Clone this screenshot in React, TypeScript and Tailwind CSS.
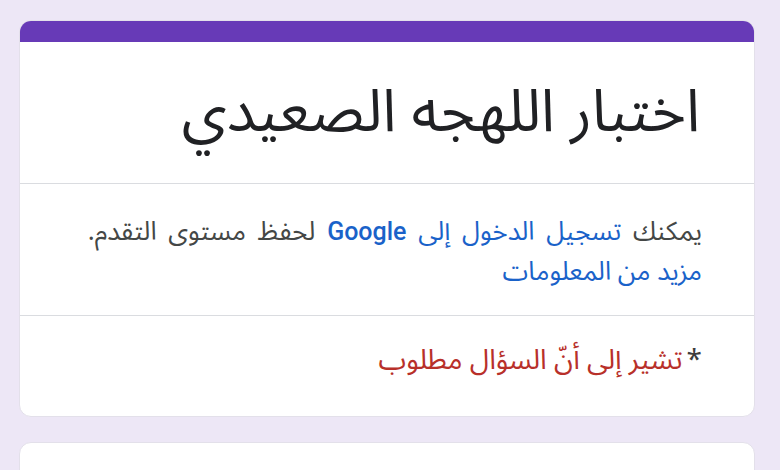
export default function App() {
  return (
    <div
      dir="rtl"
      className="h-[470px] w-[780px] overflow-hidden bg-[#ede7f6] pt-[20px] pr-[25px] pl-[19px]"
      style={{ fontFamily: '"Noto Sans Arabic", "Noto Sans", sans-serif' }}
    >
      <div className="overflow-hidden rounded-[12px] border border-[#e3e0ea] bg-white">
        <div className="h-[21px] bg-[#673ab7]" />
        <div className="flex h-[141px] items-center pr-[54px] pl-6">
          <h1 className="text-[59px] leading-none text-[#202124]">اختبار اللهجه الصعيدي</h1>
        </div>
        <div className="border-t border-[#dadce0] pt-[28px] pr-[52px] pl-6 pb-[23px] text-[26px] leading-[40px] text-[#444746]">
          <p className="[word-spacing:5px]">
            يمكنك{" "}
            <span className="text-[#1a62c9]">
              تسجيل الدخول إلى <span className="font-['Roboto'] text-[25px] font-medium">Google</span>
            </span>{" "}
            لحفظ مستوى التقدم.
          </p>
          <p className="text-[#1a62c9]">مزيد من المعلومات</p>
        </div>
        <div className="flex h-[101px] items-center border-t border-[#dadce0] pr-[52px] pl-6 pb-[10px] text-[28px] text-[#b8302a]">
          <span className="ml-1 text-[#3c3c3c]">*</span>
          <span>تشير إلى أنّ السؤال مطلوب</span>
        </div>
      </div>
      <div className="mt-[25px] h-[60px] rounded-[12px] border border-[#e3e0ea] bg-white" />
    </div>
  );
}
